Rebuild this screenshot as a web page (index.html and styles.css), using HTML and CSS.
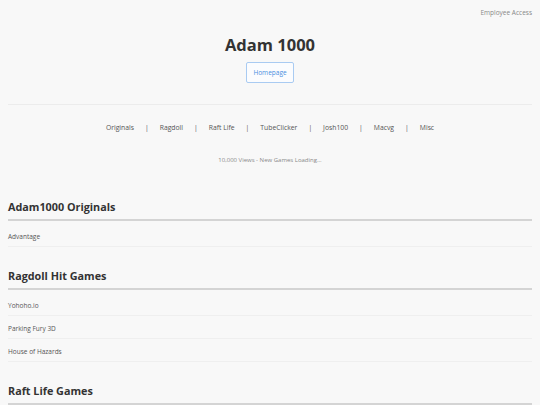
FILE: index.html
```html
<!DOCTYPE html>
<html>
<head>
<meta charset="utf-8">
<link rel="stylesheet" href="styles.css">
</head>
<body>
<div class="top"><a class="emp" href="#">Employee Access</a></div>
<header class="hero">
  <h1 class="title">Adam 1000</h1>
  <a class="btn" href="#">Homepage</a>
</header>
<nav class="nav">
  <a href="#">Originals</a><span class="sep">|</span>
  <a href="#">Ragdoll</a><span class="sep">|</span>
  <a href="#">Raft Life</a><span class="sep">|</span>
  <a href="#">TubeClicker</a><span class="sep">|</span>
  <a href="#">Josh100</a><span class="sep">|</span>
  <a href="#">Macvg</a><span class="sep">|</span>
  <a href="#">Misc</a>
</nav>
<p class="views">10,000 Views - New Games Loading...</p>
<section class="sec">
  <h2 class="sec-title">Adam1000 Originals</h2>
  <ul class="list">
    <li>Advantage</li>
  </ul>
</section>
<section class="sec">
  <h2 class="sec-title">Ragdoll Hit Games</h2>
  <ul class="list">
    <li>Yohoho.io</li>
    <li>Parking Fury 3D</li>
    <li>House of Hazards</li>
  </ul>
</section>
<section class="sec">
  <h2 class="sec-title">Raft Life Games</h2>
  <ul class="list">
    <li>Raft Life</li>
  </ul>
</section>
</body>
</html>
```
FILE: styles.css
```css
html, body { margin: 0; padding: 0; }
body {
  background: #f8f8f8;
  font-family: "Open Sans", "Liberation Sans", sans-serif;
  color: #333;
  padding: 0 8px;
}
a, a:link, a:visited { text-decoration: none; }
.top {
  display: flex;
  justify-content: flex-end;
  padding-top: 9px;
  height: 12px;
}
.emp, .emp:visited { font-size: 6.5px; color: #888; line-height: 8px; }
.hero {
  display: flex;
  flex-direction: column;
  align-items: center;
  padding-bottom: 21px;
  border-bottom: 1px solid #ececec;
}
.title {
  margin: 12px 0 0;
  font-size: 16.5px;
  font-weight: 700;
  line-height: 24px;
  color: #333;
}
.btn, .btn:visited {
  margin-top: 5px;
  width: 46px;
  height: 19px;
  border: 1px solid #a9cbf2;
  border-radius: 2px;
  color: #4a8fe0;
  font-size: 6.5px;
  display: flex;
  align-items: center;
  justify-content: center;
  background: #fbfcfe;
}
.nav {
  display: flex;
  justify-content: center;
  align-items: center;
  gap: 11px;
  margin-top: 16.5px;
  font-size: 6.8px;
  line-height: 12px;
}
.nav a, .nav a:visited { color: #555; }
.sep { color: #555; }
.views {
  text-align: center;
  font-size: 6px;
  color: #888;
  margin: 22.5px 0 0;
  line-height: 8px;
}
.sec { margin-top: 35px; }
.sec + .sec { margin-top: 21.5px; }
.sec-title {
  margin: 0;
  font-size: 10.8px;
  font-weight: 700;
  line-height: 16px;
  padding-bottom: 3.5px;
  border-bottom: 2px solid #d4d4d4;
  color: #333;
}
.list { list-style: none; margin: 3px 0 0; padding: 0; }
.list li {
  font-size: 6.5px;
  color: #555;
  line-height: 9px;
  padding: 8px 0 5px;
  border-bottom: 1px solid #efefef;
}
```
